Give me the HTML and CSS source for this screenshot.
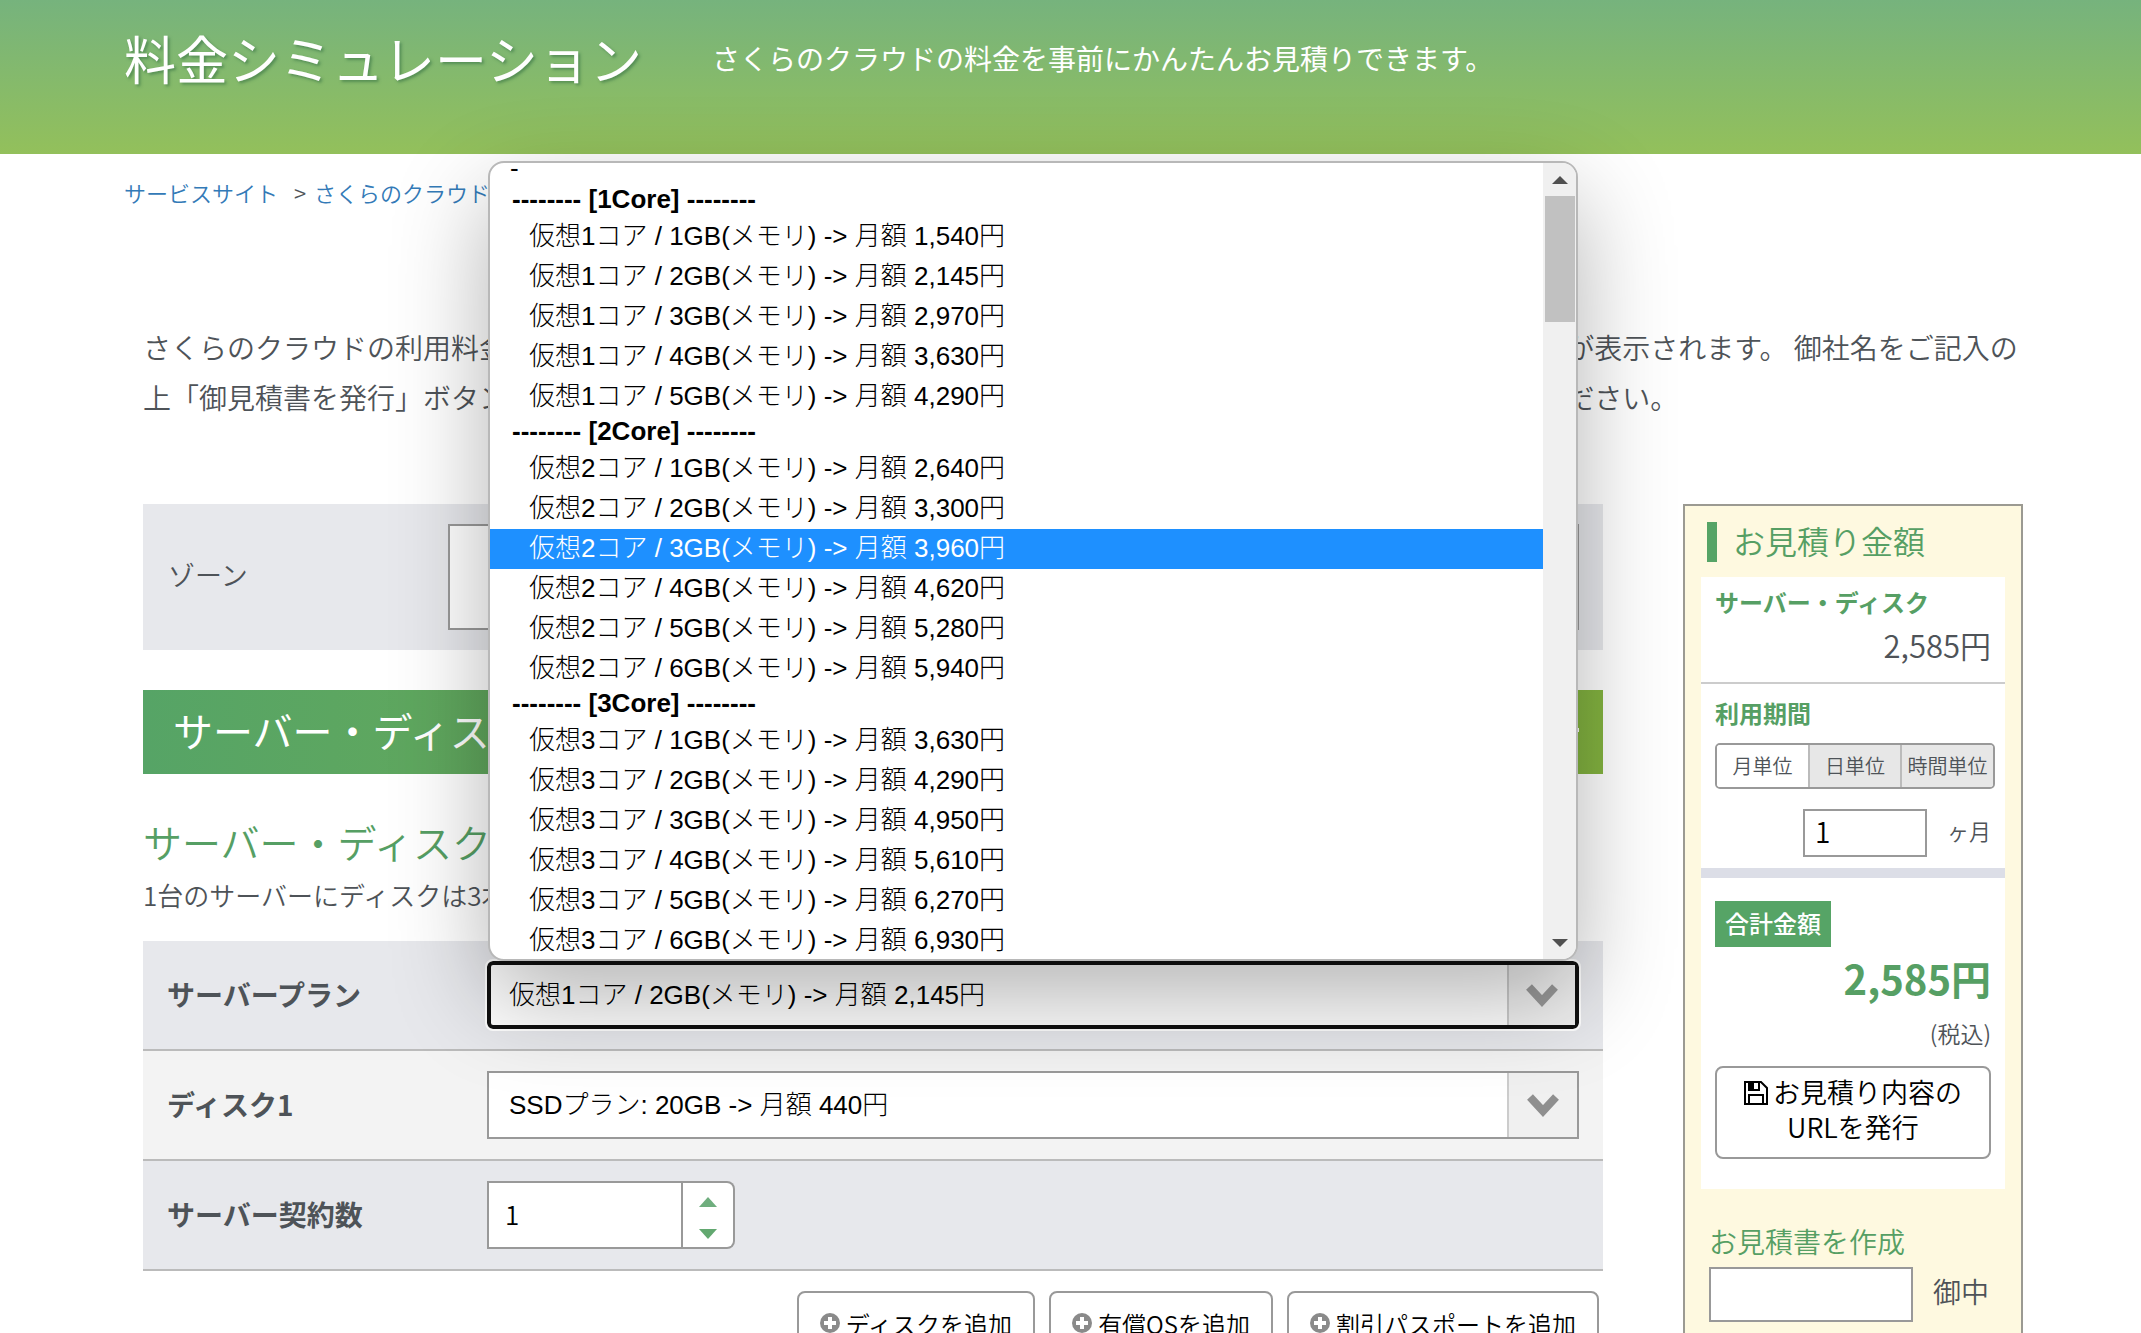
FILE: index.html
```html
<!DOCTYPE html>
<html lang="ja">
<head>
<meta charset="utf-8">
<meta name="viewport" content="width=device-width, initial-scale=1">
<title>料金シミュレーション</title>
<link rel="stylesheet" href="styles.css">
</head>
<body>
<header class="hero">
  <h1 class="hero-title">料金シミュレーション</h1>
  <p class="hero-lead">さくらのクラウドの料金を事前にかんたんお見積りできます。</p>
</header>

<nav class="crumbs" aria-label="パンくず">
  <a href="#">サービスサイト</a>
  <span class="crumb-sep">&gt;</span>
  <a href="#">さくらのクラウド</a>
</nav>

<main class="page">
  <p class="intro">さくらのクラウドの利用料金を事前に確認いただけます。ご希望のプランを選択していただくと、料金の合計金額が表示されます。 御社名をご記入の上「御見積書を発行」ボタンを押していただくと、御見積書の画面が表示されますので、印刷または保存をしてください。</p>

  <div class="columns">
    <section class="estimate">
      <div class="zone">
        <span class="zone-label">ゾーン</span>
        <div class="zone-box"></div>
      </div>

      <h2 class="banner"><span>サーバー・ディスク</span><button class="banner-toggle" type="button" aria-label="閉じる"></button></h2>

      <h3 class="plan-title">サーバー・ディスク</h3>
      <p class="plan-note">1台のサーバーにディスクは3本まで接続できます</p>

      <div class="row">
        <label class="row-label" for="plan">サーバープラン</label>
        <div class="field">
          <div class="select is-open">
            <select class="select-control" id="plan"><option>仮想1コア / 2GB(メモリ) -&gt; 月額 2,145円</option></select>
            <span class="select-arrow"><svg width="34" height="24" viewBox="0 0 34 24"><path d="M4 4 L17 18 L30 4" fill="none" stroke="#9a9a9a" stroke-width="8"/></svg></span>
          </div>
          <div class="popup">
            <ul class="options" role="listbox" aria-label="サーバープラン">
              <li class="option-first" role="option">-</li>
              <li class="group">-------- [1Core] --------</li>
              <li class="option" role="option">仮想1コア / 1GB(メモリ) -&gt; 月額 1,540円</li>
              <li class="option" role="option">仮想1コア / 2GB(メモリ) -&gt; 月額 2,145円</li>
              <li class="option" role="option">仮想1コア / 3GB(メモリ) -&gt; 月額 2,970円</li>
              <li class="option" role="option">仮想1コア / 4GB(メモリ) -&gt; 月額 3,630円</li>
              <li class="option" role="option">仮想1コア / 5GB(メモリ) -&gt; 月額 4,290円</li>
              <li class="group">-------- [2Core] --------</li>
              <li class="option" role="option">仮想2コア / 1GB(メモリ) -&gt; 月額 2,640円</li>
              <li class="option" role="option">仮想2コア / 2GB(メモリ) -&gt; 月額 3,300円</li>
              <li class="option is-active" role="option" aria-selected="true">仮想2コア / 3GB(メモリ) -&gt; 月額 3,960円</li>
              <li class="option" role="option">仮想2コア / 4GB(メモリ) -&gt; 月額 4,620円</li>
              <li class="option" role="option">仮想2コア / 5GB(メモリ) -&gt; 月額 5,280円</li>
              <li class="option" role="option">仮想2コア / 6GB(メモリ) -&gt; 月額 5,940円</li>
              <li class="group">-------- [3Core] --------</li>
              <li class="option" role="option">仮想3コア / 1GB(メモリ) -&gt; 月額 3,630円</li>
              <li class="option" role="option">仮想3コア / 2GB(メモリ) -&gt; 月額 4,290円</li>
              <li class="option" role="option">仮想3コア / 3GB(メモリ) -&gt; 月額 4,950円</li>
              <li class="option" role="option">仮想3コア / 4GB(メモリ) -&gt; 月額 5,610円</li>
              <li class="option" role="option">仮想3コア / 5GB(メモリ) -&gt; 月額 6,270円</li>
              <li class="option" role="option">仮想3コア / 6GB(メモリ) -&gt; 月額 6,930円</li>
            </ul>
            <div class="scrollbar">
              <svg width="16" height="8" viewBox="0 0 16 8"><path d="M8 0 L16 8 H0 Z" fill="#505050"/></svg>
              <div class="scroll-thumb"></div>
              <svg class="scroll-down" width="16" height="8" viewBox="0 0 16 8"><path d="M0 0 H16 L8 8 Z" fill="#505050"/></svg>
            </div>
          </div>
        </div>
      </div>

      <div class="row row-light">
        <label class="row-label" for="disk">ディスク1</label>
        <div class="field">
          <div class="select">
            <select class="select-control" id="disk"><option>SSDプラン: 20GB -&gt; 月額 440円</option></select>
            <span class="select-arrow"><svg width="34" height="24" viewBox="0 0 34 24"><path d="M4 4 L17 18 L30 4" fill="none" stroke="#8f8f8f" stroke-width="8"/></svg></span>
          </div>
        </div>
      </div>

      <div class="row">
        <label class="row-label" for="count">サーバー契約数</label>
        <div class="field stepper">
          <input class="stepper-input" id="count" type="text" value="1">
          <span class="stepper-buttons">
            <button type="button" aria-label="増やす"><svg width="18" height="10" viewBox="0 0 18 10"><path d="M9 0 L18 10 H0 Z" fill="#6fae7e"/></svg></button>
            <button type="button" aria-label="減らす"><svg width="18" height="10" viewBox="0 0 18 10"><path d="M0 0 H18 L9 10 Z" fill="#62a870"/></svg></button>
          </span>
        </div>
      </div>

      <div class="actions">
        <button class="add" type="button"><svg width="20" height="20" viewBox="0 0 20 20"><circle cx="10" cy="10" r="10" fill="#8a8a8a"/><path d="M10 4 V16 M4 10 H16" stroke="#fff" stroke-width="4"/></svg>ディスクを追加</button>
        <button class="add" type="button"><svg width="20" height="20" viewBox="0 0 20 20"><circle cx="10" cy="10" r="10" fill="#8a8a8a"/><path d="M10 4 V16 M4 10 H16" stroke="#fff" stroke-width="4"/></svg>有償OSを追加</button>
        <button class="add" type="button"><svg width="20" height="20" viewBox="0 0 20 20"><circle cx="10" cy="10" r="10" fill="#8a8a8a"/><path d="M10 4 V16 M4 10 H16" stroke="#fff" stroke-width="4"/></svg>割引パスポートを追加</button>
      </div>
    </section>

    <aside class="summary">
      <h2 class="summary-title">お見積り金額</h2>
      <div class="panel">
        <div class="panel-part">
          <h3 class="panel-head">サーバー・ディスク</h3>
          <p class="price">2,585円</p>
        </div>
        <div class="panel-part period">
          <h3 class="panel-head">利用期間</h3>
          <div class="segments">
            <label class="segment"><input type="radio" name="unit" checked>月単位</label>
            <label class="segment"><input type="radio" name="unit">日単位</label>
            <label class="segment"><input type="radio" name="unit">時間単位</label>
          </div>
          <div class="months">
            <input class="months-input" id="months" type="text" value="1">
            <label for="months">ヶ月</label>
          </div>
        </div>
        <div class="panel-part total">
          <span class="total-badge">合計金額</span>
          <p class="total-price">2,585円</p>
          <p class="tax">(税込)</p>
          <button class="issue" type="button"><svg width="24" height="24" viewBox="0 0 24 24"><path d="M1 1 H17 L23 7 V23 H1 Z M5 23 V14 H19 V23 M5 1 V9 H15 V1" fill="none" stroke="#000" stroke-width="2"/><path d="M5 1 h5 v7 h-5 z"/></svg>お見積り内容の<br>URLを発行</button>
        </div>
      </div>
      <label class="company-head" for="company">お見積書を作成</label>
      <div class="company">
        <input class="company-input" id="company" type="text">
        <span>御中</span>
      </div>
    </aside>
  </div>
</main>
</body>
</html>
```
FILE: styles.css
```css
* { box-sizing: border-box; }

body {
  margin: 0;
  background: #fff;
  color: #4e5358;
  font-family: "Noto Sans CJK JP", sans-serif;
  font-size: 28px;
  font-weight: 350;
}

h1, h2, h3, p, ul { margin: 0; padding: 0; font-weight: inherit; }
button, input, select { margin: 0; font-family: inherit; font-weight: inherit; color: #000; }
svg { flex: none; }

/* Header */
.hero {
  display: flex;
  align-items: center;
  gap: 70px;
  height: 154px;
  padding: 0 124px 38px;
  background: linear-gradient(#76b37d, #93c05b);
  color: #fff;
}
.hero-title { padding-bottom: 2px; font-size: 52px; font-weight: 400; text-shadow: 2px 2px 3px rgba(40, 100, 60, .5); }
.hero-lead { font-weight: 400; }

.crumbs {
  display: flex;
  align-items: center;
  gap: 16px;
  height: 76px;
  padding: 0 124px;
  font-size: 22px;
}
.crumbs a { color: #337ab7; text-decoration: none; }
.crumb-sep { margin-right: -8px; }

/* Page body */
.page { padding: 92px 118px 0 143px; }
.intro { margin-bottom: 82px; line-height: 50px; }
.columns { display: grid; grid-template-columns: 1fr 340px; gap: 80px; }

.zone {
  display: flex;
  align-items: center;
  height: 146px;
  padding: 0 24px 0 25px;
  background: #e7e8ec;
}
.zone-label { width: 280px; padding-bottom: 6px; font-size: 27px; }
.zone-box { flex: 1; height: 106px; border: 2px solid #999; background: #fff; }

.banner {
  display: flex;
  align-items: center;
  justify-content: space-between;
  height: 84px;
  margin-top: 40px;
  padding: 0 24px 4px 30px;
  background: linear-gradient(90deg, #56a466, #84b440);
  color: #fff;
  font-size: 40px;
  font-weight: 400;
}
.banner-toggle { width: 24px; height: 4px; padding: 0; border: 0; background: #fff; }

.plan-title { margin-top: 40px; color: #569f64; font-size: 39px; line-height: 54px; }
.plan-note { margin-bottom: 20px; font-size: 26px; line-height: 53px; }

.row {
  display: flex;
  align-items: center;
  height: 110px;
  padding: 0 24px;
  border-bottom: 2px solid #bbb;
  background: #e7e8ec;
}
.row-light { background: #f3f3f3; }
.row-label { width: 320px; padding-bottom: 2px; font-weight: 700; }
.field { position: relative; flex: 1; }

/* Drop-down */
.select {
  display: grid;
  grid-template-columns: 1fr 70px;
  height: 68px;
  border: 2px solid #999;
  background: #fff;
}
.select.is-open { grid-template-columns: 1fr 68px; border: 4px solid #101010; border-radius: 6px; outline: 2px solid #fff; }
.select-control {
  grid-area: 1 / 1 / 2 / 3;
  padding: 0 20px;
  border: 0;
  outline: 0;
  appearance: none;
  background: transparent;
  font-family: "Liberation Sans", "Noto Sans CJK JP", sans-serif;
  font-size: 26px;
  font-weight: 300;
}
.is-open .select-control { padding: 0 18px; }
.select-arrow {
  grid-area: 1 / 2;
  display: grid;
  place-items: center;
  border-left: 2px solid #ccc;
  background: #f0f0f0;
  pointer-events: none;
}

/* Open option list, over the page */
.popup {
  position: absolute;
  z-index: 10;
  right: 1px;
  bottom: 100%;
  left: 1px;
  display: flex;
  height: 800px;
  overflow: hidden;
  border: 2px solid #b8b8b8;
  border-radius: 16px;
  background: #fff;
  box-shadow: 0 36px 96px rgba(0, 0, 0, .3);
  color: #000;
  font-family: "Liberation Sans", "Noto Sans CJK JP", sans-serif;
  font-size: 26px;
  font-weight: 300;
}
.options { flex: 1; list-style: none; }
.option-first { height: 22px; padding-left: 20px; line-height: 10px; }
.group { height: 32px; padding-left: 22px; font-weight: 700; line-height: 29px; }
.option { height: 40px; padding-left: 39px; line-height: 38px; }
.option.is-active { background: #1e90ff; color: #fff; }
.scrollbar {
  display: flex;
  flex-direction: column;
  align-items: center;
  width: 33px;
  padding: 13px 0 12px;
  background: #f0f0f0;
}
.scroll-thumb { width: 30px; height: 126px; margin-top: 12px; background: #c1c1c1; }
.scroll-down { margin-top: auto; }

.stepper { display: flex; }
.stepper-input { width: 196px; height: 68px; padding: 0 16px 4px; border: 2px solid #999; background: #fff; font-size: 26px; }
.stepper-buttons {
  display: flex;
  flex-direction: column;
  width: 52px;
  border: 2px solid #999;
  border-left: 0;
  border-radius: 0 8px 8px 0;
  background: #fff;
}
.stepper-buttons button { display: grid; flex: 1; place-items: center; padding: 6px 0 0; border: 0; background: none; }

.actions { display: flex; justify-content: flex-end; gap: 14px; padding: 20px 4px 40px 0; }
.add {
  display: flex;
  align-items: center;
  gap: 6px;
  height: 66px;
  padding: 0 21px 2px;
  border: 2px solid #999;
  border-radius: 8px;
  background: #fff;
  font-size: 24px;
}

/* Estimate panel */
.summary { padding: 16px; border: 2px solid #9b9a92; background: #fef9e0; }
.summary-title {
  height: 40px;
  margin: 0 6px 15px;
  padding-left: 16px;
  border-left: 10px solid #56a466;
  color: #569f64;
  font-size: 32px;
  line-height: 36px;
}
.panel { background: #fff; }
.panel-part { padding: 10px 14px 0; }
.panel-head { color: #569f64; font-size: 24px; font-weight: 700; line-height: 30px; }
.price { padding: 6px 0 15px; font-size: 31px; line-height: 44px; text-align: right; }
.period { height: 196px; padding-top: 14px; border-top: 2px solid #ccc; border-bottom: 10px solid #dcdee7; }
.segments {
  display: grid;
  grid-template-columns: 91px 92px 1fr;
  height: 46px;
  margin: 15px -4px 20px 0;
  overflow: hidden;
  border: 2px solid #999;
  border-radius: 5px;
}
.segment { display: grid; place-items: center; background: #e7e7e7; font-size: 20px; line-height: 38px; }
.segment + .segment { border-left: 2px solid #bbb; }
.segment:has(:checked) { background: #fff; }
.segment input { position: absolute; opacity: 0; }
.months { display: flex; align-items: center; justify-content: flex-end; gap: 20px; font-size: 22px; line-height: 40px; }
.months label { padding-bottom: 6px; }
.months-input { width: 124px; height: 48px; padding: 0 10px 4px; border: 2px solid #999; background: #fff; font-size: 28px; }

.total { display: flex; flex-direction: column; padding: 23px 14px 30px; }
.total-badge {
  align-self: flex-start;
  padding: 0 10px 2px;
  background: #56a466;
  color: #fff;
  font-size: 24px;
  font-weight: 500;
  line-height: 44px;
}
.total-price { color: #569f64; font-size: 40px; font-weight: 700; line-height: 62px; text-align: right; }
.tax { font-size: 23px; line-height: 48px; text-align: right; }
.issue { height: 93px; margin-top: 9px; padding: 0 0 8px; border: 2px solid #999; border-radius: 8px; background: #fff; font-size: 27px; line-height: 35px; }
.issue svg { margin-right: 5px; vertical-align: -2px; }

.company-head { display: block; margin: 31px 8px 5px; color: #569f64; line-height: 42px; }
.company { display: flex; align-items: center; gap: 20px; padding: 0 8px; }
.company span { padding-bottom: 8px; }
.company-input { width: 204px; height: 55px; border: 2px solid #999; background: #fff; font-size: 28px; }
```
